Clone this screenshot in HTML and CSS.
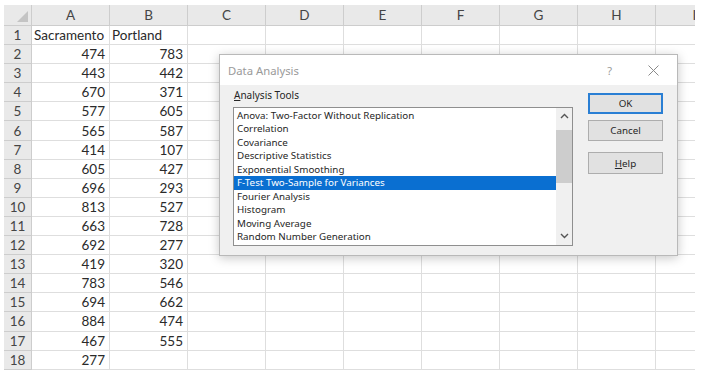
FILE: index.html
```html
<!DOCTYPE html>
<html>
<head>
  <link rel="stylesheet" href="styles.css">
</head>
<body>
  <div class="sheet">
    <div class="grid" id="grid"></div>

    <div class="dialog">
      <div class="dialog-title">
        <span class="title-text">Data Analysis</span>
        <span class="title-help">?</span>
        <svg class="title-close" width="11" height="11" viewBox="0 0 11 11">
          <path d="M0.5 0.5 L10.5 10.5 M10.5 0.5 L0.5 10.5" stroke="#8a8a8a" stroke-width="1" fill="none"/>
        </svg>
      </div>
      <div class="dialog-body">
        <div class="tools">
          <div class="tools-label"><u>A</u>nalysis Tools</div>
          <div class="listbox">
            <ul class="list-items">
              <li>Anova: Two-Factor Without Replication</li>
              <li>Correlation</li>
              <li>Covariance</li>
              <li>Descriptive Statistics</li>
              <li>Exponential Smoothing</li>
              <li class="selected">F-Test Two-Sample for Variances</li>
              <li>Fourier Analysis</li>
              <li>Histogram</li>
              <li>Moving Average</li>
              <li>Random Number Generation</li>
            </ul>
            <div class="scrollbar">
              <svg class="arrow" width="9" height="6" viewBox="0 0 9 6">
                <path d="M1 5 L4.5 1.5 L8 5" stroke="#555" stroke-width="1.4" fill="none"/>
              </svg>
              <div class="track">
                <div class="thumb"></div>
              </div>
              <svg class="arrow" width="9" height="6" viewBox="0 0 9 6">
                <path d="M1 1 L4.5 4.5 L8 1" stroke="#555" stroke-width="1.4" fill="none"/>
              </svg>
            </div>
          </div>
        </div>
        <div class="buttons">
          <button class="btn btn-default">OK</button>
          <button class="btn">Cancel</button>
          <button class="btn btn-help"><u>H</u>elp</button>
        </div>
      </div>
    </div>
  </div>

  <script>
    // Colonne A e B del foglio
    const sacramento = [474, 443, 670, 577, 565, 414, 605, 696, 813, 663, 692, 419, 783, 694, 884, 467, 277];
    const portland = [783, 442, 371, 605, 587, 107, 427, 293, 527, 728, 277, 320, 546, 662, 474, 555];
    const letters = ['A', 'B', 'C', 'D', 'E', 'F', 'G', 'H', 'I'];
    const grid = document.getElementById('grid');

    function cell(cls, text) {
      const el = document.createElement('div');
      el.className = cls;
      el.textContent = text || '';
      grid.appendChild(el);
    }

    // Header row
    cell('corner');
    letters.forEach(l => cell('col-head', l));

    // Row 1 with labels
    cell('row-head', '1');
    cell('cell', 'Sacramento');
    cell('cell', 'Portland');
    for (let i = 2; i < letters.length; i++) cell('cell');

    for (let r = 0; r < 17; r++) {
      cell('row-head', String(r + 2));
      cell('cell num', sacramento[r]);
      cell('cell num', portland[r] !== undefined ? portland[r] : '');
      for (let i = 2; i < letters.length; i++) cell('cell');
    }
  </script>
</body>
</html>
```

FILE: styles.css
```css
* {
  box-sizing: border-box;
  margin: 0;
  padding: 0;
}

body {
  background: #fff;
  font-family: Lato, "Open Sans", sans-serif;
  width: 709px;
  height: 377px;
  overflow: hidden;
}

.sheet {
  position: relative;
  width: 695px;
  height: 377px;
  padding: 5px 0 0 4px;
  overflow: hidden;
}

.grid {
  display: grid;
  grid-template-columns: 28px repeat(9, 78px);
  grid-template-rows: 21px repeat(18, 19.1px);
  width: 691px;
  overflow: hidden;
  font-size: 13.5px;
  color: #2a2a2a;
}

.corner,
.col-head,
.row-head {
  background: #e9e9e9;
  color: #454545;
  border-right: 1px solid #cdcdcd;
  border-bottom: 1px solid #cdcdcd;
  display: flex;
  align-items: center;
  justify-content: center;
}

.corner {
  position: relative;
}

.corner::after {
  content: "";
  position: absolute;
  right: 3px;
  bottom: 3px;
  border-left: 11px solid transparent;
  border-bottom: 11px solid #c4c4c4;
}

.cell {
  border-right: 1px solid #dedede;
  border-bottom: 1px solid #dedede;
  display: flex;
  align-items: center;
  padding: 0 2px;
  white-space: nowrap;
  overflow: hidden;
}

.cell.num {
  justify-content: flex-end;
  padding-right: 4px;
}

/* Data Analysis dialog */
.dialog {
  position: absolute;
  left: 219px;
  top: 54px;
  width: 459px;
  height: 202px;
  background: #f0f0f0;
  border: 1px solid #b9b9b9;
  box-shadow: 0 2px 10px rgba(0, 0, 0, 0.22);
  font-family: "Noto Sans", sans-serif;
  font-size: 9.8px;
  color: #262626;
  display: flex;
  flex-direction: column;
}

.dialog-title {
  height: 30px;
  background: #fff;
  display: flex;
  align-items: center;
  padding: 0 18px 0 8px;
}

.title-text {
  flex: 1;
  font-size: 11.3px;
  color: #9a9a9a;
}

.title-help {
  font-size: 11px;
  color: #9a9a9a;
  margin-right: 36px;
}

.dialog-body {
  flex: 1;
  display: flex;
  gap: 15px;
  padding: 4px 14px 9px 13px;
}

.tools {
  display: flex;
  flex-direction: column;
}

.tools-label {
  height: 18px;
  line-height: 13px;
  font-size: 10px;
  padding-left: 1px;
}

.listbox {
  width: 340px;
  height: 139px;
  background: #fff;
  border: 1px solid #8f8f8f;
  display: flex;
}

.list-items {
  flex: 1;
  list-style: none;
  padding-top: 1px;
}

.list-items li {
  height: 13.45px;
  line-height: 13.45px;
  padding-left: 3px;
  white-space: nowrap;
}

.list-items li.selected {
  background: #0a6fd1;
  color: #fff;
}

.scrollbar {
  width: 16px;
  background: #f0f0f0;
  display: flex;
  flex-direction: column;
  align-items: center;
  padding: 5px 0 6px;
}

.arrow {
  flex: 0 0 auto;
}

.track {
  flex: 1;
  width: 100%;
  padding: 11px 0 0;
}

.thumb {
  width: 100%;
  height: 53px;
  background: #cdcdcd;
}

.buttons {
  display: flex;
  flex-direction: column;
  padding-top: 4px;
}

.btn {
  width: 75px;
  height: 21px;
  font-family: "Noto Sans", sans-serif;
  font-size: 9.8px;
  color: #262626;
  background: #e1e1e1;
  border: 1px solid #adadad;
  margin-bottom: 6px;
}

.btn-default {
  border: 2px solid #2a7fd4;
  height: 21px;
}

.btn-help {
  margin-top: 5px;
  height: 22px;
}
```
